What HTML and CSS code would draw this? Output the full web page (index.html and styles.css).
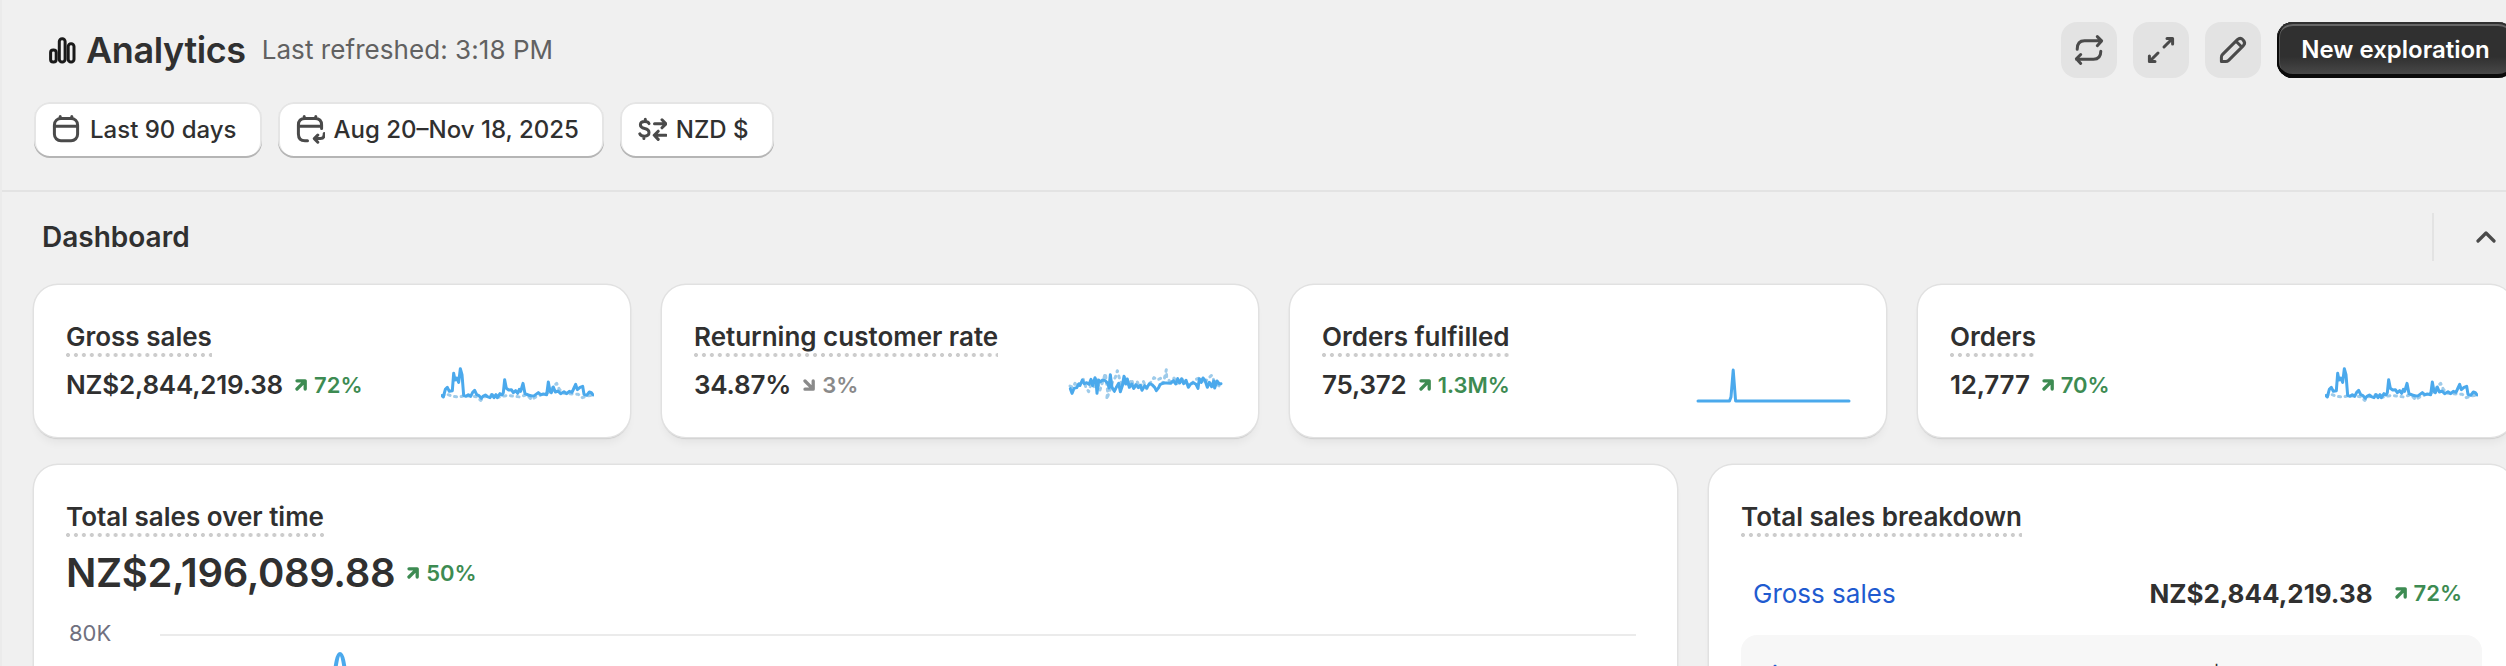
FILE: index.html
```html
<!DOCTYPE html>
<html lang="en">
<head>
<meta charset="utf-8">
<title>Analytics</title>
<link rel="stylesheet" href="styles.css">
</head>
<body>
<svg class="defs" width="0" height="0" aria-hidden="true">
  <symbol id="up" viewBox="0 0 12 12"><path d="M2 1.8H10.2V10M9.6 2.4L2 10" fill="none" stroke="currentColor" stroke-width="3.3" stroke-linecap="round" stroke-linejoin="round"/></symbol>
  <symbol id="down" viewBox="0 0 12 12"><path d="M2 10.2H10.2V2M9.6 9.6L2 2" fill="none" stroke="currentColor" stroke-width="3.3" stroke-linecap="round" stroke-linejoin="round"/></symbol>
  <symbol id="trend" viewBox="63 45 459 120">
    <path class="prev" d="M66 137L80 132L96 139L118 141L130 138L150 138L170 140L182 151L192 141L215 134L235 142L262 136L285 139L300 141L320 134L335 149L350 139L365 134L385 128L400 110L410 100L418 118L432 130L455 132L475 133L487 143L500 138L520 136"/>
    <path class="line" d="M66 137L70 141L76 118L82 112L88 124L97 122L101 70L105 90L110 84L116 97L121 56L126 74L131 136L138 139L145 134L152 139L158 127L164 121L170 134L177 137L184 145L190 138L196 135L202 140L210 143L216 134L222 143L228 134L232 143L240 131L246 135L250 128L254 89L259 115L266 120L274 119L280 128L287 122L293 130L298 118L302 124L309 100L315 131L325 135L335 138L343 137L355 128L362 134L370 132L380 134L385 96L390 124L394 128L400 111L406 126L414 123L422 131L432 125L440 131L448 124L456 127L462 114L467 103L472 119L480 112L488 109L492 133L500 136L508 126L514 128L519 135"/>
  </symbol>
</svg>
<div class="page">
  <header class="header">
    <div class="title-row">
      <svg class="title-icon" width="27" height="27" viewBox="0 0 27 27" fill="none" stroke="#1a1a1a" stroke-width="3"><rect x="1.6" y="12.9" width="5.6" height="12.2" rx="2.6"/><rect x="10.3" y="1.8" width="5.8" height="23.3" rx="2.8"/><rect x="19.2" y="6.8" width="5.8" height="18.3" rx="2.8"/></svg>
      <h1 class="title">Analytics</h1>
      <span class="refreshed">Last refreshed: 3:18 PM</span>
      <div class="actions">
        <button class="icon-btn" aria-label="Refresh"><svg width="56" height="56" viewBox="0 0 56 56"><path d="M16.2 27.2C16.2 22 18.8 18.8 23.5 18.8H40.5M36.3 14.6L40.6 18.9L36.3 23.7M39.8 29.2C39.8 34.2 37.2 37.2 32.5 37.2H15.5M19.7 32.5L15.4 36.8L19.7 41.4"/></svg></button>
        <button class="icon-btn" aria-label="Full screen"><svg width="56" height="56" viewBox="0 0 56 56"><path d="M34 16.4H39.6V22M38.8 17.2L31 25M16.4 34V39.6H22M17.2 38.8L25 31"/></svg></button>
        <button class="icon-btn" aria-label="Edit"><svg width="56" height="56" viewBox="0 0 56 56"><path d="M16.4 39.6V35.2Q16.4 33.6 17.6 32.4L32.4 17.6Q35.3 15 38 17.8Q41 20.7 38.4 23.6L23.6 38.4Q22.4 39.6 20.8 39.6ZM31 19.2L36.8 25"/></svg></button>
        <button class="primary">New exploration</button>
      </div>
    </div>
    <div class="filters">
      <button class="pill"><svg width="30" height="30" viewBox="0 0 30 30"><rect x="3.4" y="4.4" width="23.2" height="22.4" rx="6.5"/><path d="M3.4 12.2H26.6M9.2 2.6V4.6M20.8 2.6V4.6"/></svg>Last 90 days</button>
      <button class="pill"><svg width="30" height="30" viewBox="0 0 30 30"><path d="M12.5 26.8H10Q3.4 26.8 3.4 20V11Q3.4 4.4 10 4.4H20Q26.6 4.4 26.6 11V14.5M3.4 12.2H26.6M9.2 2.6V4.6M20.8 2.6V4.6M29.2 19.5V20.5Q29.2 24.5 25.5 24.5H19.5M22.8 21L19.3 24.6L22.8 28.2"/></svg>Aug 20–Nov 18, 2025</button>
      <button class="pill"><svg width="30" height="30" viewBox="0 0 30 30"><path d="M12 9.6Q11.3 7.4 7.7 7.4Q3.4 7.4 3.4 10.8Q3.4 13.7 7.7 14.5Q12 15.3 12 18.6Q12 22.2 7.4 22.2Q3.6 22.2 2.8 19.8M8.3 5.2V7.2M6.9 22.4V24.4M17.5 9.8H28.8M25 5.8L29 9.8L25 13.8M29 21.2H17.4M21.2 17.2L17.2 21.2L21.2 25.4"/></svg>NZD $</button>
    </div>
  </header>

  <section class="dash-head">
    <h2>Dashboard</h2>
    <div class="toggle"><svg width="20" height="12" viewBox="0 0 20 12"><path d="M2 10L10 2L18 10" fill="none" stroke="#4a4a4a" stroke-width="3.2" stroke-linecap="round" stroke-linejoin="round"/></svg></div>
  </section>

  <section class="metrics">
    <article class="card">
      <h3 class="label">Gross sales</h3>
      <div class="metric"><span class="value">NZ$2,844,219.38</span><span class="change up"><svg><use href="#up"/></svg>72%</span><svg class="spark"><use href="#trend"/></svg></div>
    </article>
    <article class="card">
      <h3 class="label">Returning customer rate</h3>
      <div class="metric"><span class="value">34.87%</span><span class="change flat"><svg><use href="#down"/></svg>3%</span>
        <svg class="spark" viewBox="87 75 459 120">
          <path class="prev" d="M90 138L98 142L105 130L112 140L120 128L130 118L137 140L146 155L154 130L162 140L170 118L180 150L188 125L196 100L203 155L200 178L210 150L218 125L226 112L232 92L238 114L246 140L254 112L266 138L275 118L282 144L292 126L300 142L310 124L320 146L330 130L342 113L352 120L362 115L370 130L379 89L380 112L390 125L402 114L412 130L424 115L436 128L450 136L465 120L480 112L494 130L504 115L515 106L522 122L534 135L543 142"/>
          <path class="line" d="M91 146L96 160L102 145L110 143L116 132L120 136L127 120L133 131L140 128L147 133L153 118L158 137L165 113L168 124L171 160L176 120L180 126L188 120L196 122L204 131L207 144L211 104L216 142L223 154L230 140L236 130L241 155L247 137L252 109L257 132L262 117L268 142L275 132L281 145L288 134L295 143L301 136L306 151L314 137L320 144L328 131L336 134L344 142L349 152L356 143L360 134L370 129L380 129L392 130L400 122L407 132L413 116L419 129L425 117L431 131L438 121L445 142L452 132L460 128L468 133L474 145L478 116L484 127L489 114L495 121L502 142L508 127L515 140L521 123L524 144L531 123L538 132L543 131"/>
        </svg></div>
    </article>
    <article class="card">
      <h3 class="label">Orders fulfilled</h3>
      <div class="metric"><span class="value">75,372</span><span class="change up"><svg><use href="#up"/></svg>1.3M%</span>
        <svg class="spark" viewBox="0 0 153 40"><path class="line thin" d="M1 36H32.5L34 32L36.2 5L38.6 36H152"/></svg></div>
    </article>
    <article class="card">
      <h3 class="label">Orders</h3>
      <div class="metric"><span class="value">12,777</span><span class="change up"><svg><use href="#up"/></svg>70%</span><svg class="spark"><use href="#trend"/></svg></div>
    </article>
  </section>

  <section class="reports">
    <article class="card">
      <h3 class="label">Total sales over time</h3>
      <div class="total"><span class="total-value">NZ$2,196,089.88</span><span class="change up"><svg><use href="#up"/></svg>50%</span></div>
      <div class="chart"><span class="tick">80K</span>
        <svg class="plot" width="1476" height="200" viewBox="0 0 1476 200"><path d="M0 11H1476" stroke="#ebebeb" stroke-width="2"/><path d="M166 90C174 70 175 30 180 30S186 70 194 90" fill="none" stroke="#4ba9ec" stroke-width="4"/></svg>
      </div>
    </article>
    <article class="card">
      <h3 class="label">Total sales breakdown</h3>
      <div class="row"><a class="link">Gross sales</a><span class="row-value">NZ$2,844,219.38</span><span class="change up"><svg><use href="#up"/></svg>72%</span></div>
      <div class="row shaded"><a class="link">Discounts</a><span class="currency">$</span></div>
    </article>
  </section>
</div>
</body>
</html>
```
FILE: styles.css
```css
* { box-sizing: border-box; }
html, body { margin: 0; height: 666px; overflow: hidden; background: #f0f0f0; }
body { font-family: Inter, "Liberation Sans", sans-serif; color: #303030; }
h1, h2, h3 { margin: 0; font-weight: 600; }
button { font: inherit; color: inherit; border: 0; padding: 0; }
.defs { display: block; }
.page { width: 2548px; height: 666px; overflow: hidden; border-left: 2px solid #ebebeb; }

.header { height: 192px; padding: 22px 34px 0 32px; border-bottom: 2px solid #e3e3e3; }
.title-row { display: flex; align-items: center; height: 56px; padding-left: 14px; }
.title-icon { margin-left: 1px; }
.title { margin-left: 10px; font-size: 36px; letter-spacing: -0.4px; line-height: 48px; }
.refreshed { margin-left: 16px; font-size: 26px; letter-spacing: .06px; line-height: 40px; color: #616161; }
.actions { display: flex; gap: 16px; margin-left: auto; }
.icon-btn { display: flex; width: 56px; height: 56px; border-radius: 16px; background: #e3e3e3; }
.icon-btn svg, .pill svg { fill: none; stroke: #4a4a4a; stroke-width: 3; stroke-linecap: round; stroke-linejoin: round; }
.primary { width: 237px; height: 56px; border-radius: 16px; font-size: 24px; font-weight: 600; line-height: 56px; color: #fff;
  background: linear-gradient(#303030 62%, #4a4a4a 96%);
  box-shadow: inset 0 2px 0 #303030, inset 0 -4px 0 #0a0a0a, inset 2px 0 0 #0a0a0a, inset 0 4px 0 #666, inset 3px 0 0 #555; }

.filters { display: flex; gap: 16px; margin-top: 24px; }
.pill { display: flex; align-items: center; height: 56px; padding: 0 25px 2px 17px; border-radius: 16px; background: #fff; font-size: 24px; font-weight: 500;
  box-shadow: inset 0 -2px 0 #b5b5b5, inset 0 0 0 2px #e5e5e5; }
.pill svg { margin-right: 9px; }

.dash-head { display: flex; align-items: center; justify-content: space-between; height: 93px; padding: 0 34px 3px 40px; }
.dash-head h2 { font-size: 28px; line-height: 40px; }
.toggle { display: flex; align-items: center; width: 82px; height: 48px; padding-left: 42px; border-left: 2px solid #e3e3e3; }

.metrics { display: grid; grid-template-columns: repeat(4, 596px); gap: 32px; padding-left: 32px; }
.card { background: #fff; border-radius: 24px; padding: 32px;
  box-shadow: 0 0 0 1.5px #e1e1e1, 0 2px 1px rgba(26, 26, 26, .17), 0 8px 8px -2px rgba(26, 26, 26, .05); }
.label { width: fit-content; height: 40px; font-size: 26px; line-height: 40px;
  background: radial-gradient(circle at 2px 2px, #ccc 1.7px, transparent 2.3px) 0 36px / 7.95px 4px repeat-x; }
.metric { display: flex; align-items: center; height: 40px; margin-top: 8px; }
.value { font-size: 26px; font-weight: 600; letter-spacing: -.2px; line-height: 40px; }
.change { display: flex; align-items: center; gap: 7px; margin-left: 12px; font-size: 22px; font-weight: 600; line-height: 40px; }
.change svg { width: 12px; height: 12px; }
.up { color: #3d8b52; }
.flat { color: #8a8a8a; }
.spark { width: 153px; height: 40px; margin: 0 4px 0 auto; overflow: visible; }
.line, .prev { fill: none; stroke: #4ba9ec; stroke-width: 9; stroke-linejoin: round; stroke-linecap: round; }
.thin { stroke-width: 3; }
.prev { stroke: #9ecbea; stroke-dasharray: 6 14; }

.reports { display: grid; grid-template-columns: 1643px 805px; gap: 32px; margin-top: 28px; padding-left: 32px; }
.reports .card { height: 260px; }
.total { display: flex; align-items: center; height: 48px; margin-top: 12px; }
.total-value { font-size: 40px; font-weight: 600; letter-spacing: -.35px; line-height: 48px; }
.chart { display: flex; margin-top: 26px; padding-left: 3px; }
.tick { width: 91px; font-size: 22px; line-height: 20px; color: #6f7080; }
.plot { margin-top: 1px; }
.row { display: flex; align-items: center; height: 60px; margin-top: 26px; padding: 0 20px 0 12px; font-size: 26px; }
.link { color: #1f5bd0; }
.row-value { margin-left: auto; font-weight: 700; letter-spacing: -.05px; }
.row .change { margin-left: 22px; }
.shaded { height: 80px; margin-top: 12px; border-radius: 16px; background: #f7f7f7; }
.currency { margin: 0 237px 0 auto; font-weight: 600; }
```
